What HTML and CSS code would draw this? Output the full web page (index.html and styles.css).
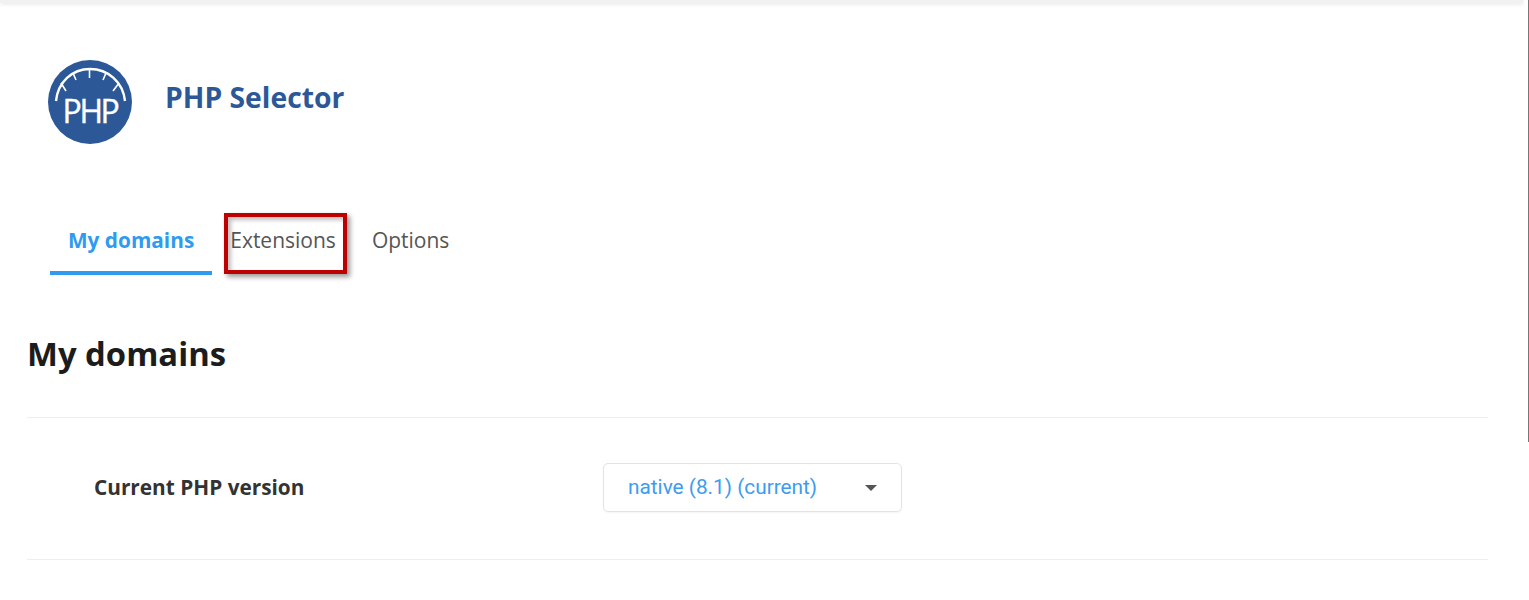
FILE: index.html
```html
<!DOCTYPE html>
<html lang="en">
<head>
  <meta charset="UTF-8">
  <title>PHP Selector</title>
  <link rel="stylesheet" href="styles.css">
</head>
<body>
  <div class="topbar"></div>
  <div class="page">
    <header class="app-head">
      <svg class="logo" width="84" height="84" viewBox="0 0 84 84">
        <circle cx="42" cy="42" r="42" fill="#2c5898"/>
        <path d="M8 41 C10 22 24 9 42 9 C60 9 75 22 77 41" fill="none" stroke="#fff" stroke-width="2.400"/>
        <path d="M41.500 9 V18 M25 13 L28 20 M58 13 L55 20 M13 23 L18 31 M71 23 L65 31" stroke="#fff" stroke-width="1.600"/>
        <text x="42" y="63" text-anchor="middle" class="logo-text">PHP</text>
      </svg>
      <h2 class="app-title">PHP Selector</h2>
    </header>

    <nav class="tabs">
      <a class="tab tab-active">My domains</a>
      <a class="tab">Extensions</a>
      <a class="tab">Options</a>
      <div class="highlight"></div>
    </nav>

    <h1 class="section-title">My domains</h1>

    <div class="row">
      <label class="row-label">Current PHP version</label>
      <div class="select">
        <span class="select-value">native (8.1) (current)</span>
        <i class="caret"></i>
      </div>
    </div>
  </div>
  <div class="scrollbar"></div>
</body>
</html>
```

FILE: styles.css
```css
html, body {
  height: 600px;
  overflow: hidden;
}
body {
  margin: 0;
  background-color: #fff;
  font-family: 'Open Sans', sans-serif;
  color: #555;
}
.topbar {
  height: 3px;
  margin-right: 6px;
  background-color: #f1f1f1;
  box-shadow: 0 1px 4px rgba(0,0,0,0.12);
}
.scrollbar {
  position: absolute;
  top: 0;
  right: 0;
  width: 1px;
  height: 442px;
  background-color: #777;
}
.page {
  padding: 0 41px 0 27px;
}
.app-head {
  display: flex;
  align-items: center;
  padding: 57px 0 0 21px;
}
.logo {
  flex: none;
}
.logo-text {
  font-family: 'Open Sans', sans-serif;
  font-size: 32px;
  letter-spacing: -2.400px;
  fill: #fff;
  stroke: #fff;
  stroke-width: 0.4px;
}
.app-title {
  margin: 0 0 10px 33px;
  font-size: 28.3px;
  font-weight: 700;
  color: #2c5898;
}
.tabs {
  position: relative;
  display: flex;
  margin: 67px 0 0 23px;
}
.tab {
  padding: 0 18px;
  height: 60px;
  line-height: 58px;
  font-size: 21px;
  color: #555;
}
.tab-active {
  font-size: 20.8px;
  font-weight: 700;
  color: #2f9bf0;
  border-bottom: 4px solid #2f9bf0;
}
.highlight {
  position: absolute;
  left: 174px;
  top: 2px;
  width: 115px;
  height: 53px;
  border: 4px solid #bd0000;
  box-shadow: 3px 3px 5px rgba(0,0,0,0.4), inset 3px 3px 4px rgba(0,0,0,0.25);
}
.section-title {
  margin: 54px 0 0;
  font-size: 32.8px;
  line-height: 50px;
  font-weight: 700;
  color: #1c1c1c;
}
.row {
  display: flex;
  align-items: center;
  margin-top: 38px;
  padding: 45px 0 47px 67px;
  border-top: 1px solid #eee;
  border-bottom: 1px solid #eee;
}
.row-label {
  width: 509px;
  padding-bottom: 2px;
  font-size: 20.8px;
  font-weight: 700;
  color: #333;
}
.select {
  display: flex;
  align-items: center;
  justify-content: space-between;
  width: 299px;
  height: 49px;
  padding: 0 24px;
  box-sizing: border-box;
  border: 1px solid #e3e3ec;
  border-radius: 5px;
  box-shadow: 0 1px 2px rgba(0,0,0,0.05);
  font-family: Roboto, sans-serif;
  font-size: 20.8px;
  color: #3c9cf0;
}
.select-value {
  padding-bottom: 2px;
}
.caret {
  width: 0;
  height: 0;
  border-left: 6px solid transparent;
  border-right: 6px solid transparent;
  border-top: 6px solid #555;
}
```
